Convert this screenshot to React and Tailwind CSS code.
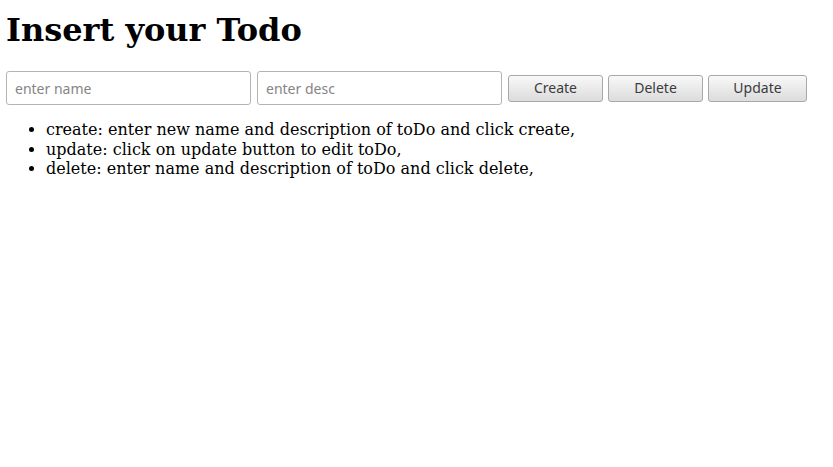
import React, { useState } from "react";

const btn =
  "h-[27px] rounded-[3px] border border-[#a8a8a8] bg-gradient-to-b from-[#f8f8f8] to-[#dcdcdc] text-[14px] text-[#3c3c3c] font-['Noto_Sans',sans-serif] leading-none";

const input =
  "w-[245px] h-[34px] rounded-[3px] border border-[#b4b4b4] bg-white px-[8px] text-[14px] text-[#333] placeholder:text-[#858585] font-['Noto_Sans',sans-serif] outline-none";

export default function App() {
  const [name, setName] = useState("");
  const [desc, setDesc] = useState("");

  return (
    <div className="min-h-screen bg-white px-[6px] pt-[12px] font-['DejaVu_Serif',serif] text-black">
      <h1 className="text-[32px] font-bold leading-[37px]">Insert your Todo</h1>
      <div className="mt-[22px] flex items-center">
        <input
          className={input}
          placeholder="enter name"
          value={name}
          onChange={(e) => setName(e.target.value)}
        />
        <input
          className={`${input} ml-[6px]`}
          placeholder="enter desc"
          value={desc}
          onChange={(e) => setDesc(e.target.value)}
        />
        <button className={`${btn} ml-[6px] w-[95px]`}>Create</button>
        <button className={`${btn} ml-[5px] w-[95px]`}>Delete</button>
        <button className={`${btn} ml-[5px] w-[99px]`}>Update</button>
      </div>
      <ul className="mt-[15px] list-disc pl-[40px] text-[16px] leading-[19.5px]">
        <li>create: enter new name and description of toDo and click create,</li>
        <li>update: click on update button to edit toDo,</li>
        <li>delete: enter name and description of toDo and click delete,</li>
      </ul>
    </div>
  );
}
